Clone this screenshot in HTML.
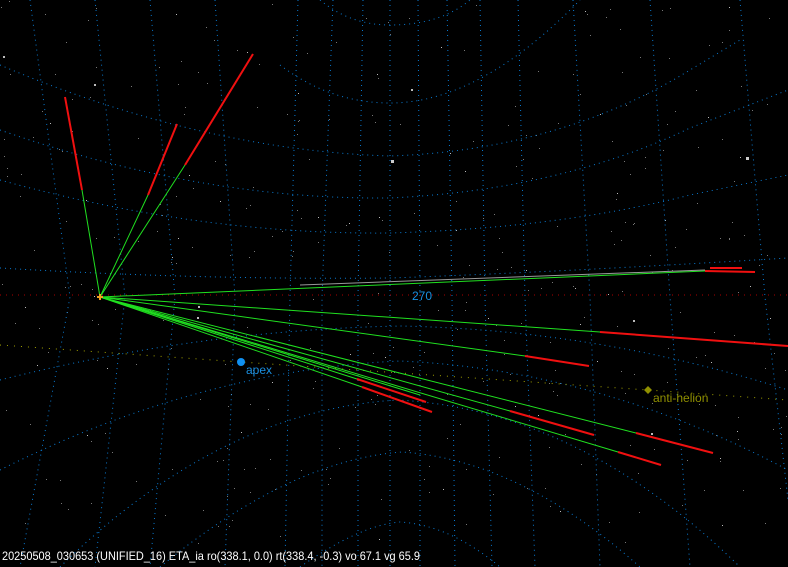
<!DOCTYPE html>
<html><head><meta charset="utf-8"><style>
html,body{margin:0;padding:0;background:#000;width:788px;height:567px;overflow:hidden}
svg{display:block}
.t{font-family:"Liberation Sans",sans-serif;font-size:12px}
</style></head><body>
<svg id="s" width="788" height="567" viewBox="0 0 788 567" xmlns="http://www.w3.org/2000/svg">
<rect width="788" height="567" fill="#000"/>
<g id="stars"></g>
<g id="grid" fill="none" stroke="#0a7ad0" stroke-width="1" stroke-dasharray="1 4">
<path d="M320 0 Q350 25 390 25 Q440 25 470 0"/>
<path d="M280 65 Q330 103 390 103 Q480 103 580 0"/>
<path d="M0 65 Q200 150 390 156 Q560 150 690 70 L740 40"/>
<path d="M0 130 Q200 200 390 198 Q560 190 690 128 L788 90"/>
<path d="M0 180 Q200 235 390 233 Q560 228 690 195 L788 175"/>
<path d="M0 268 Q200 280 390 278 Q560 272 788 258"/>
<path d="M0 380 Q200 330 400 326 Q600 330 788 390"/>
<path d="M0 470 Q200 370 400 361 Q600 370 788 470"/>
<path d="M60 567 Q220 410 398 400 Q580 410 740 567"/>
<path d="M160 567 Q290 460 402 452 Q520 460 640 567"/>
<path d="M300 567 Q360 525 400 522 Q450 525 500 567"/>
<path d="M30 0 L70 297 L20 567"/>
<path d="M95 0 L125 297 L95 567"/>
<path d="M150 0 L175 297 L150 567"/>
<path d="M215 0 L235 297 L225 567"/>
<path d="M298 0 L290 297 L285 567"/>
<path d="M333 0 L322 297 L322 567"/>
<path d="M363 0 L358 297 L358 567"/>
<path d="M390 0 L390 297 L390 567"/>
<path d="M418 0 L420 297 L420 567"/>
<path d="M447 0 L452 297 L455 567"/>
<path d="M480 0 L485 297 L492 567"/>
<path d="M518 0 L525 297 L535 567"/>
<path d="M573 0 L590 297 L600 567"/>
<path d="M650 0 L670 297 L690 567"/>
<path d="M740 0 L765 297 L788 500"/>
</g>
<line x1="0" y1="295" x2="788" y2="295" stroke="#a00" stroke-width="1" stroke-dasharray="1 5"/>
<path d="M0 345 L241 362 L648 390 L788 400" fill="none" stroke="#a0a000" stroke-width="1" stroke-dasharray="1 6"/>
<g stroke="#20e020" stroke-width="1" fill="none">
<line x1="100" y1="297" x2="82" y2="190"/>
<line x1="100" y1="297" x2="148" y2="195"/>
<line x1="100" y1="297" x2="185" y2="165"/>
<line x1="100" y1="297" x2="705" y2="271"/>
<line x1="100" y1="297" x2="600" y2="332"/>
<line x1="100" y1="297" x2="525" y2="356"/>
<line x1="100" y1="297" x2="357" y2="379"/>
<line x1="100" y1="297" x2="362" y2="387"/>
<line x1="100" y1="297" x2="510" y2="411"/>
<line x1="100" y1="297" x2="636" y2="433"/>
<line x1="100" y1="297" x2="618" y2="452"/>
<line x1="100" y1="297" x2="420" y2="395"/>
</g>
<line x1="300" y1="285" x2="705" y2="270" stroke="#999" stroke-width="1"/>
<g stroke="#f01010" stroke-width="2" fill="none">
<line x1="65" y1="97" x2="82" y2="190"/>
<line x1="177" y1="124" x2="148" y2="195"/>
<line x1="253" y1="54" x2="185" y2="165"/>
<line x1="705" y1="271" x2="755" y2="272"/>
<line x1="710" y1="268" x2="742" y2="268"/>
<line x1="600" y1="332" x2="788" y2="346"/>
<line x1="525" y1="356" x2="589" y2="366"/>
<line x1="357" y1="379" x2="426" y2="402"/>
<line x1="362" y1="387" x2="432" y2="412"/>
<line x1="510" y1="411" x2="594" y2="435"/>
<line x1="636" y1="433" x2="713" y2="453"/>
<line x1="618" y1="452" x2="661" y2="465"/>
</g>
<path d="M97 297h6M100 294v6" stroke="#f0a020" stroke-width="2"/>
<circle cx="241" cy="362" r="4" fill="#1090f0"/>
<text x="246" y="374" class="t" fill="#1a8fe0">apex</text>
<path d="M648 386 L652 390 L648 394 L644 390Z" fill="#909000"/>
<text x="653" y="402" class="t" fill="#909000">anti-helion</text>
<text x="412" y="300" class="t" fill="#1a8fe0" font-size="11">270</text>
<text x="2" y="560" class="t" fill="#fff" font-size="11" textLength="418" lengthAdjust="spacingAndGlyphs">20250508_030653 (UNIFIED_16) ETA_ia ro(338.1, 0.0) rt(338.4, -0.3) vo 67.1 vg 65.9</text>
</svg>
<script>
var s=12345;function r(){s=(s*1103515245+12345)%2147483648;return s/2147483648;}
var g=document.getElementById('stars'),h='';
for(var i=0;i<380;i++){var x=r()*788,y=r()*545,b=r();var sz=b>0.97?2:1;var c=b>0.85?'#bbb':'#777';h+='<rect x="'+x.toFixed(0)+'" y="'+y.toFixed(0)+'" width="'+sz+'" height="'+sz+'" fill="'+c+'"/>';}
h+='<rect x="746" y="157" width="3" height="3" fill="#ccc"/><rect x="391" y="160" width="3" height="3" fill="#ccc"/>';
g.innerHTML=h;
</script>
</body></html>
